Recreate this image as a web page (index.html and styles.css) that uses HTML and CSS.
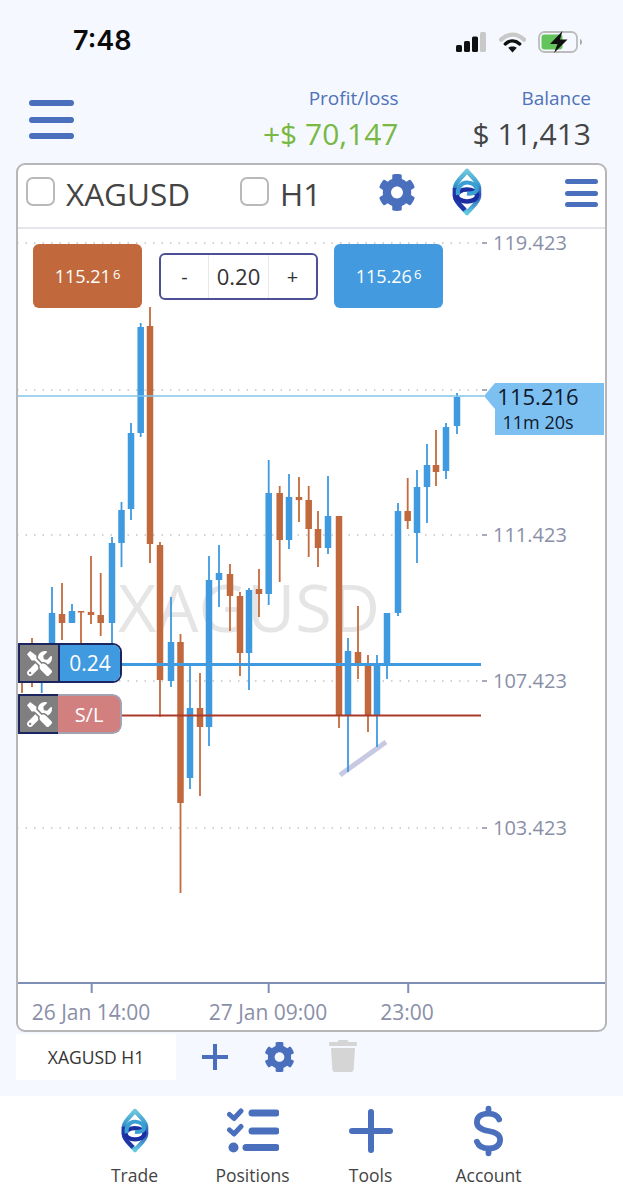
FILE: index.html
```html
<!DOCTYPE html>
<html lang="en">
<head>
<meta charset="utf-8">
<title>XAGUSD H1</title>
<link rel="stylesheet" href="styles.css">
</head>
<body>
<svg class="defs" width="0" height="0" aria-hidden="true">
  <defs>
    <linearGradient id="leaf" x1="0" y1="0" x2="0" y2="1">
      <stop offset="0" stop-color="#6ec6dc"/><stop offset=".3" stop-color="#3f9fd0"/><stop offset=".55" stop-color="#2a4fb4"/><stop offset=".75" stop-color="#3a86c8"/><stop offset="1" stop-color="#62cbe0"/>
    </linearGradient>
    <symbol id="logo" viewBox="0 0 30 48">
      <path d="M15 3C19 8 27 14 27 20V28C27 34 19 40 15 45C11 40 3 34 3 28V20C3 14 11 8 15 3Z" fill="none" stroke="url(#leaf)" stroke-width="4.500" stroke-linejoin="round"/>
      <path d="M3 20V28C3 33 9 38 13 42" fill="none" stroke="#2236a8" stroke-width="4.500"/>
      <ellipse cx="15" cy="27.500" rx="10" ry="6" fill="none" stroke="#1c2fa0" stroke-width="4.500"/>
      <path d="M6 27C5 20 9 14.500 15 14.500S25 18 24.500 22C24 25 19 26 15 25.500" fill="none" stroke="#3a9fd2" stroke-width="4.200"/>
    </symbol>
    <symbol id="gear" viewBox="0 0 512 512">
      <path d="M487.4 315.7l-42.6-24.6c4.3-23.2 4.3-47 0-70.2l42.6-24.6c4.9-2.8 7.1-8.6 5.5-14-11.1-35.6-30-67.8-54.7-94.6-3.8-4.1-10-5.1-14.8-2.3L380.8 110c-17.9-15.4-38.5-27.3-60.8-35.1V25.8c0-5.6-3.9-10.5-9.4-11.7-36.7-8.2-74.3-7.8-109.2 0-5.5 1.2-9.4 6.1-9.4 11.7V75c-22.2 7.9-42.8 19.8-60.8 35.1L88.7 85.5c-4.9-2.8-11-1.9-14.8 2.3-24.7 26.7-43.6 58.9-54.7 94.6-1.7 5.4.6 11.2 5.5 14L67.3 221c-4.3 23.2-4.3 47 0 70.2l-42.6 24.6c-4.9 2.8-7.1 8.6-5.5 14 11.1 35.6 30 67.8 54.7 94.6 3.8 4.1 10 5.1 14.8 2.3l42.6-24.6c17.9 15.4 38.5 27.3 60.8 35.1v49.2c0 5.6 3.9 10.5 9.4 11.7 36.7 8.2 74.3 7.8 109.2 0 5.5-1.2 9.4-6.1 9.4-11.7v-49.2c22.2-7.9 42.8-19.8 60.8-35.1l42.6 24.6c4.9 2.8 11 1.9 14.8-2.3 24.7-26.7 43.6-58.9 54.7-94.6 1.5-5.5-.7-11.3-5.6-14.1zM256 336c-44.1 0-80-35.9-80-80s35.9-80 80-80 80 35.9 80 80-35.9 80-80 80z"/>
    </symbol>
    <symbol id="tools" viewBox="0 0 512 512">
      <path d="M501.1 395.7L384 278.6c-23.1-23.1-57.6-27.6-85.4-13.9L192 158.1V96L64 0 0 64l96 128h62.1l106.6 106.6c-13.6 27.8-9.2 62.3 13.9 85.4l117.1 117.1c14.6 14.6 38.2 14.6 52.7 0l52.7-52.7c14.5-14.6 14.5-38.2 0-52.7zM331.7 225c28.3 0 54.9 11 74.9 31l19.4 19.4c15.8-6.9 30.8-16.5 43.8-29.5 37.1-37.1 49.7-89.3 37.9-136.7-2.2-9-13.5-12.1-20.1-5.5l-74.4 74.4-67.9-11.3L334 98.9l74.4-74.4c6.6-6.6 3.4-17.9-5.7-20.2-47.4-11.7-99.6.9-136.6 37.9-28.5 28.5-41.9 66.1-41.2 103.6l82.1 82.1c8.1-1.9 16.5-2.9 24.7-2.9zm-103.9 82l-56.7-56.7L18.7 402.8c-25 25-25 65.5 0 90.5s65.5 25 90.5 0l123.6-123.6c-7.6-19.9-9.9-41.6-5-62.7zM64 472c-13.2 0-24-10.8-24-24 0-13.3 10.7-24 24-24s24 10.7 24 24c0 13.2-10.7 24-24 24z"/>
    </symbol>
  </defs>
</svg>

<div class="phone">
  <div class="status">
    <span class="clock">7:48</span>
    <div class="status-icons">
      <svg class="signal" viewBox="0 0 31 20" width="31" height="20">
        <rect x="0" y="13" width="6" height="7" rx="1.500" fill="#111"/>
        <rect x="8" y="9" width="6" height="11" rx="1.500" fill="#111"/>
        <rect x="16" y="4.500" width="6" height="15.500" rx="1.500" fill="#111"/>
        <rect x="24" y="0" width="6" height="20" rx="1.500" fill="#c9c9c9"/>
      </svg>
      <svg class="wifi" viewBox="0 0 28 22" width="27" height="21">
        <path d="M2 8C9 1 19 1 26 8" fill="none" stroke="#c9c9c9" stroke-width="4.500" stroke-linecap="round"/>
        <path d="M6.500 12.500C11 8.500 17 8.500 21.500 12.500" fill="none" stroke="#111" stroke-width="3.600" stroke-linecap="round"/>
        <path d="M14 21.500L9.500 16.500C12 14.700 16 14.700 18.500 16.500Z" fill="#111"/>
      </svg>
      <svg class="battery" viewBox="0 0 44 22" width="44" height="22">
        <rect x="1" y="1" width="38" height="20" rx="5.500" fill="none" stroke="#bcbcbc" stroke-width="1.800"/>
        <rect x="3.500" y="3.500" width="21" height="15" rx="3" fill="#62c45a"/>
        <path d="M42 8V14C43.500 13.500 44 12 44 11S43.500 8.500 42 8Z" fill="#aaa"/>
        <path d="M24.500 0L12 13H19.500L16 22L29.500 8.500H22Z" fill="#111"/>
      </svg>
    </div>
  </div>

  <header class="topbar">
    <div class="burger burger-lg"><i></i><i></i><i></i></div>
    <div class="stat stat-pl">
      <span class="stat-label">Profit/loss</span>
      <span class="stat-value green">+$ 70,147</span>
    </div>
    <div class="stat stat-bal">
      <span class="stat-label">Balance</span>
      <span class="stat-value">$ 11,413</span>
    </div>
  </header>

  <section class="card">
    <div class="toolbar">
      <label class="check check-symbol"><span class="box"></span><span>XAGUSD</span></label>
      <label class="check check-frame"><span class="box"></span><span>H1</span></label>
      <svg class="icon-gear"><use href="#gear"/></svg>
      <svg class="icon-logo"><use href="#logo"/></svg>
      <div class="burger burger-sm"><i></i><i></i><i></i></div>
    </div>

    <div class="plot">
      <span class="watermark">XAGUSD</span>
      <svg class="chart" viewBox="17 229 589 753" width="589" height="753">
        <path class="grid" d="M17 243H481M17 390H481M17 535H481M17 681H481M17 828H481"/>
        <path class="tick" d="M482 243H487M482 390H487M482 535H487M482 681H487M482 828H487"/>
        <path class="trend" d="M340 775L386 742"/>
        <path class="wick wick-down" d="M22 650V693M32 638V687M62 583V640M81 611V643M91 556V624M100.700 573V636M150 307V563M160 542V717M180.500 634V893M200 673V796M230 564V631M240 592V676M259 569V617M279.700 486V582M299 477V522M308.700 486V557M318 511V567M339 516V728M358 606V679M368 655V732M407.700 478V529M436 430V486"/>
        <path class="wick wick-up" d="M41.700 660V693M52 587V643M72 604V623M112 537V643M121.500 502V567M131 423V520M140.700 323V437M171 597V687M190 665V789M209 556V746M219 545V607M249 588V690M268.700 460V605M289 474V549M328 476V554M348 638V772M377 655V747M387 613V679M398 503V616M417 470V563M427 444V523M446 423V479M457 393V434"/>
        <path class="body body-down" d="M62 614V623M81 611V612.500M91 612V615M100.700 615V623M150 326V544M160 545V680M180.500 642V803M200 708V727M230 574V596M240 596V653M259 589V594M279.700 493V540M299 497V500M308.700 500V529M318 529V548M339 516V715M358 652V663M368 666V715M407.700 511V521M436 465V472"/>
        <path class="body body-up" d="M52 613V643M72 611V623M112 543V623M121.500 510V543M131 433V509M140.700 327V433M171 642V681M190 708V778M209 580V727M219 573V580M249 590V653M268.700 493V594M289 497V540M328 516V548M348 651V715M377 665V715M387 613V663M398 511V613M417 487V533M427 465V487M446 427V471M457 397V426"/>
        <path class="line-price" d="M17 396H484"/>
        <path class="line-pos" d="M121 664.500H481"/>
        <path class="line-sl" d="M121 715.500H481"/>
        <path class="axis-arrow" d="M484 396L495 383H604V435H495V409Z"/>
      </svg>

      <span class="price p119">119.423</span>
      <span class="price p111">111.423</span>
      <span class="price p107">107.423</span>
      <span class="price p103">103.423</span>

      <div class="last-price"><b>115.216</b><small>11m 20s</small></div>

      <div class="order-panel">
        <button class="trade sell">115.21<sup>6</sup></button>
        <div class="stepper"><span>-</span><span class="qty">0.20</span><span>+</span></div>
        <button class="trade buy">115.26<sup>6</sup></button>
      </div>

      <div class="pos-tag tag-pos">
        <span class="tag-tool"><svg><use href="#tools"/></svg></span>
        <span class="tag-text">0.24</span>
      </div>
      <div class="pos-tag tag-sl">
        <span class="tag-tool"><svg><use href="#tools"/></svg></span>
        <span class="tag-text">S/L</span>
      </div>
    </div>

    <div class="time-axis">
      <span class="t t1">26 Jan 14:00</span>
      <span class="t t2">27 Jan 09:00</span>
      <span class="t t3">23:00</span>
    </div>
  </section>

  <div class="tabs">
    <div class="tab">XAGUSD H1</div>
    <span class="tab-plus"></span>
    <svg class="tab-gear"><use href="#gear"/></svg>
    <svg class="tab-trash" viewBox="0 0 448 512"><path d="M432 32H312l-9.400-18.700A24 24 0 0 0 281.100 0H166.800a23.720 23.720 0 0 0-21.400 13.300L136 32H16A16 16 0 0 0 0 48v32a16 16 0 0 0 16 16h416a16 16 0 0 0 16-16V48a16 16 0 0 0-16-16zM53.200 467a48 48 0 0 0 47.900 45h245.800a48 48 0 0 0 47.900-45L416 128H32z"/></svg>
  </div>

  <nav class="nav">
    <div class="nav-item">
      <svg class="nav-icon nav-logo"><use href="#logo"/></svg>
      <span>Trade</span>
    </div>
    <div class="nav-item">
      <svg class="nav-icon" viewBox="0 0 52 46" width="52" height="46">
        <g fill="none" stroke="#4a70bd" stroke-width="5" stroke-linecap="round" stroke-linejoin="round">
          <path d="M2.500 6.500L7 10.500L14 3"/>
          <path d="M2.500 22L7 26L14 18.500"/>
          <path d="M25 5H49M25 23H49M19 39.500H49" stroke-width="7"/>
        </g>
        <circle cx="6.500" cy="39.500" r="5" fill="#4a70bd"/>
      </svg>
      <span>Positions</span>
    </div>
    <div class="nav-item">
      <svg class="nav-icon" viewBox="0 0 44 46" width="44" height="46">
        <path d="M22 4V42M3 23H41" fill="none" stroke="#4a70bd" stroke-width="6" stroke-linecap="round"/>
      </svg>
      <span>Tools</span>
    </div>
    <div class="nav-item">
      <svg class="nav-icon nav-dollar" viewBox="0 0 32 52" width="32" height="52">
        <path d="M27 14C25 9 21 8 16 8C9 8 4 11 4 17C4 23 10 25 16 26C22 27 28 29 28 35C28 41 23 44 16 44C10 44 6 42 4 37M16 3V8M16 44V49" fill="none" stroke="#4a70bd" stroke-width="6" stroke-linecap="round"/>
      </svg>
      <span>Account</span>
    </div>
  </nav>
</div>
</body>
</html>
```
FILE: styles.css
```css
* { box-sizing: border-box; }
html, body { margin: 0; padding: 0; }
body {
  background: #f5f8fe;
  font-family: "Open Sans", "Noto Sans", sans-serif;
  color: #444;
}
.defs { position: absolute; }
.phone {
  width: 623px;
  height: 1200px;
  display: flex;
  flex-direction: column;
  overflow: hidden;
}

/* status bar */
.status {
  height: 80px;
  padding: 23px 41px 0 73px;
  display: flex;
  justify-content: space-between;
  align-items: flex-start;
}
.clock {
  font-family: Inter, "Liberation Sans", sans-serif;
  font-size: 27px;
  font-weight: 600;
  line-height: 36px;
  color: #0b0b0b;
}
.status-icons {
  display: flex;
  align-items: center;
  gap: 12px;
  margin-top: 8px;
}

/* header */
.topbar {
  height: 83px;
  display: flex;
  align-items: flex-start;
  padding-left: 29px;
}
.burger { display: flex; flex-direction: column; justify-content: space-between; }
.burger i { display: block; background: #4a70bd; border-radius: 3px; }
.burger-lg { width: 45px; height: 39px; margin-top: 20px; }
.burger-lg i { height: 6px; }
.burger-sm { width: 33px; height: 28px; position: absolute; left: 547px; top: 14px; }
.burger-sm i { height: 5px; }
.stat { display: flex; flex-direction: column; align-items: flex-end; }
.stat-pl { margin-left: auto; }
.stat-bal { margin-left: 74px; margin-right: 32px; }
.stat-label { font-size: 19px; line-height: 26px; color: #4f72b8; margin-top: 5px; }
.stat-value { font-size: 30px; line-height: 40px; margin-top: 3px; color: #444; }
.green { color: #78b843; }

/* card */
.card {
  height: 869px;
  margin: 0 16px;
  border: 2px solid #b7b7b9;
  border-radius: 9px;
  background: #fff;
  display: flex;
  flex-direction: column;
  overflow: hidden;
}
.toolbar {
  height: 64px;
  flex: none;
  border-bottom: 2px solid #e4e5e8;
  position: relative;
}
.check {
  position: absolute;
  top: 11px;
  display: flex;
  align-items: center;
  gap: 11px;
  font-size: 31.500px;
  line-height: 36px;
  color: #444;
}
.check-symbol { left: 8px; }
.check-frame { left: 222px; }
.box {
  width: 29px;
  height: 29px;
  border: 2px solid #b9b9b9;
  border-radius: 7px;
  background: #fff;
  margin-top: -5px;
}
.icon-gear { position: absolute; left: 360px; top: 8px; width: 38px; height: 39px; fill: #4a70bd; }
.icon-logo { position: absolute; left: 434px; top: 3px; width: 30px; height: 48px; }

.plot { position: relative; flex: none; height: 753px; }
.chart { position: absolute; left: -1px; top: 0; display: block; }
.watermark {
  position: absolute;
  left: 100px;
  top: 332px;
  font-size: 66.500px;
  line-height: 90px;
  color: #e5e5e5;
  white-space: nowrap;
}
.grid { fill: none; stroke: #c4c4c4; stroke-width: 1.500; stroke-dasharray: 1.500 7; }
.tick { fill: none; stroke: #8a8fa8; stroke-width: 1.500; }
.trend { fill: none; stroke: #c7c9e3; stroke-width: 5; }
.wick { fill: none; stroke-width: 1.800; }
.wick-down { stroke: #c46c3e; }
.wick-up { stroke: #3f9ae0; }
.body { fill: none; stroke-width: 6.500; }
.body-down { stroke: #c1693c; }
.body-up { stroke: #3f9ae0; }
.line-price { fill: none; stroke: #7fc4e8; stroke-width: 1.600; }
.line-pos { fill: none; stroke: #3f9ae0; stroke-width: 3; }
.line-sl { fill: none; stroke: #a93a2a; stroke-width: 1.800; }
.axis-arrow { fill: #7cc0f2; }

.price {
  position: absolute;
  left: 475px;
  font-size: 20px;
  line-height: 24px;
  color: #8a8fa8;
}
.p119 { top: 2px; }
.p111 { top: 294px; }
.p107 { top: 440px; }
.p103 { top: 587px; }

.last-price {
  position: absolute;
  left: 477px;
  top: 154px;
  width: 86px;
  height: 52px;
  display: flex;
  flex-direction: column;
  align-items: center;
  color: #10182a;
}
.last-price b { font-weight: 400; font-size: 22px; line-height: 27px; }
.last-price small { font-size: 18px; line-height: 24px; }

.order-panel {
  position: absolute;
  left: 15px;
  top: 15px;
  display: flex;
  align-items: center;
  gap: 17px;
}
.trade {
  width: 109px;
  height: 64px;
  border: 0;
  border-radius: 6px;
  color: #fff;
  font-family: inherit;
  font-size: 18px;
  padding: 0;
}
.trade sup { font-size: 13px; margin-left: 2px; vertical-align: 4px; line-height: 0; }
.sell { background: #c1693c; }
.buy { background: #439adf; margin-left: -1px; }
.stepper {
  width: 159px;
  height: 47px;
  border: 2px solid #4d4f97;
  border-radius: 6px;
  background: #fff;
  display: grid;
  grid-template-columns: 47px 1fr 47px;
  align-items: center;
  text-align: center;
  font-size: 20px;
  color: #333;
}
.stepper .qty {
  font-size: 22px;
  border-left: 1px solid #e8e8e8;
  border-right: 1px solid #e8e8e8;
  line-height: 43px;
}

.pos-tag {
  position: absolute;
  left: 0;
  width: 104px;
  height: 40px;
  display: flex;
  border-radius: 0 9px 9px 0;
  overflow: hidden;
}
.tag-pos { top: 414px; border: 2px solid #1b2560; }
.tag-sl { top: 465px; }
.tag-tool {
  width: 38px;
  flex: none;
  background: #7f7f7f;
  display: flex;
  align-items: center;
  justify-content: center;
}
.tag-sl .tag-tool { width: 40px; border: 2px solid #1b2560; border-right: 0; }
.tag-tool svg { width: 25px; height: 25px; fill: #fff; }
.tag-text {
  flex: 1;
  display: flex;
  align-items: center;
  justify-content: center;
  color: #fff;
  font-size: 20px;
}
.tag-pos .tag-text { background: #3f9ae0; border-left: 2px solid #1b2560; font-size: 21px; }
.tag-sl .tag-text { background: #d27f7f; border: 2px solid #a2a2b0; border-left: 0; border-radius: 0 9px 9px 0; }

.time-axis {
  flex: 1;
  position: relative;
  border-top: 2px solid #7e8fb6;
}
.t {
  position: absolute;
  top: 15px;
  transform: translateX(-50%);
  font-size: 21px;
  line-height: 26px;
  color: #8a8fa8;
  white-space: nowrap;
}
.t::before {
  content: "";
  position: absolute;
  left: 50%;
  top: -15px;
  width: 2px;
  height: 9px;
  background: #7e8fb6;
}
.t1 { left: 73px; }
.t2 { left: 250px; }
.t3 { left: 389px; }

/* tabs */
.tabs {
  height: 64px;
  flex: none;
  position: relative;
  padding-left: 16px;
}
.tab {
  width: 160px;
  height: 46px;
  margin-top: 2px;
  background: #fff;
  font-size: 17.500px;
  line-height: 46px;
  text-align: center;
  color: #333;
}
.tab-plus {
  position: absolute;
  left: 202px;
  top: 12px;
  width: 26px;
  height: 26px;
  background:
    linear-gradient(#4a70bd, #4a70bd) center / 100% 4px no-repeat,
    linear-gradient(#4a70bd, #4a70bd) center / 4px 100% no-repeat;
  border-radius: 2px;
}
.tab-gear { position: absolute; left: 264px; top: 9px; width: 31px; height: 32px; fill: #4a70bd; }
.tab-trash { position: absolute; left: 329px; top: 8px; width: 28px; height: 32px; fill: #d5d5d5; }

/* bottom nav */
.nav {
  flex: 1;
  background: #fff;
  display: grid;
  grid-template-columns: repeat(4, 118px);
  justify-content: center;
}
.nav-item {
  position: relative;
  display: flex;
  flex-direction: column;
  align-items: center;
  font-size: 17.500px;
  color: #444;
}
.nav-item span { position: absolute; top: 66px; line-height: 26px; }
.nav-icon { position: absolute; top: 12px; }
.nav-logo { top: 12px; width: 28px; height: 45px; }
.nav-dollar { top: 9px; width: 31px; }
```
